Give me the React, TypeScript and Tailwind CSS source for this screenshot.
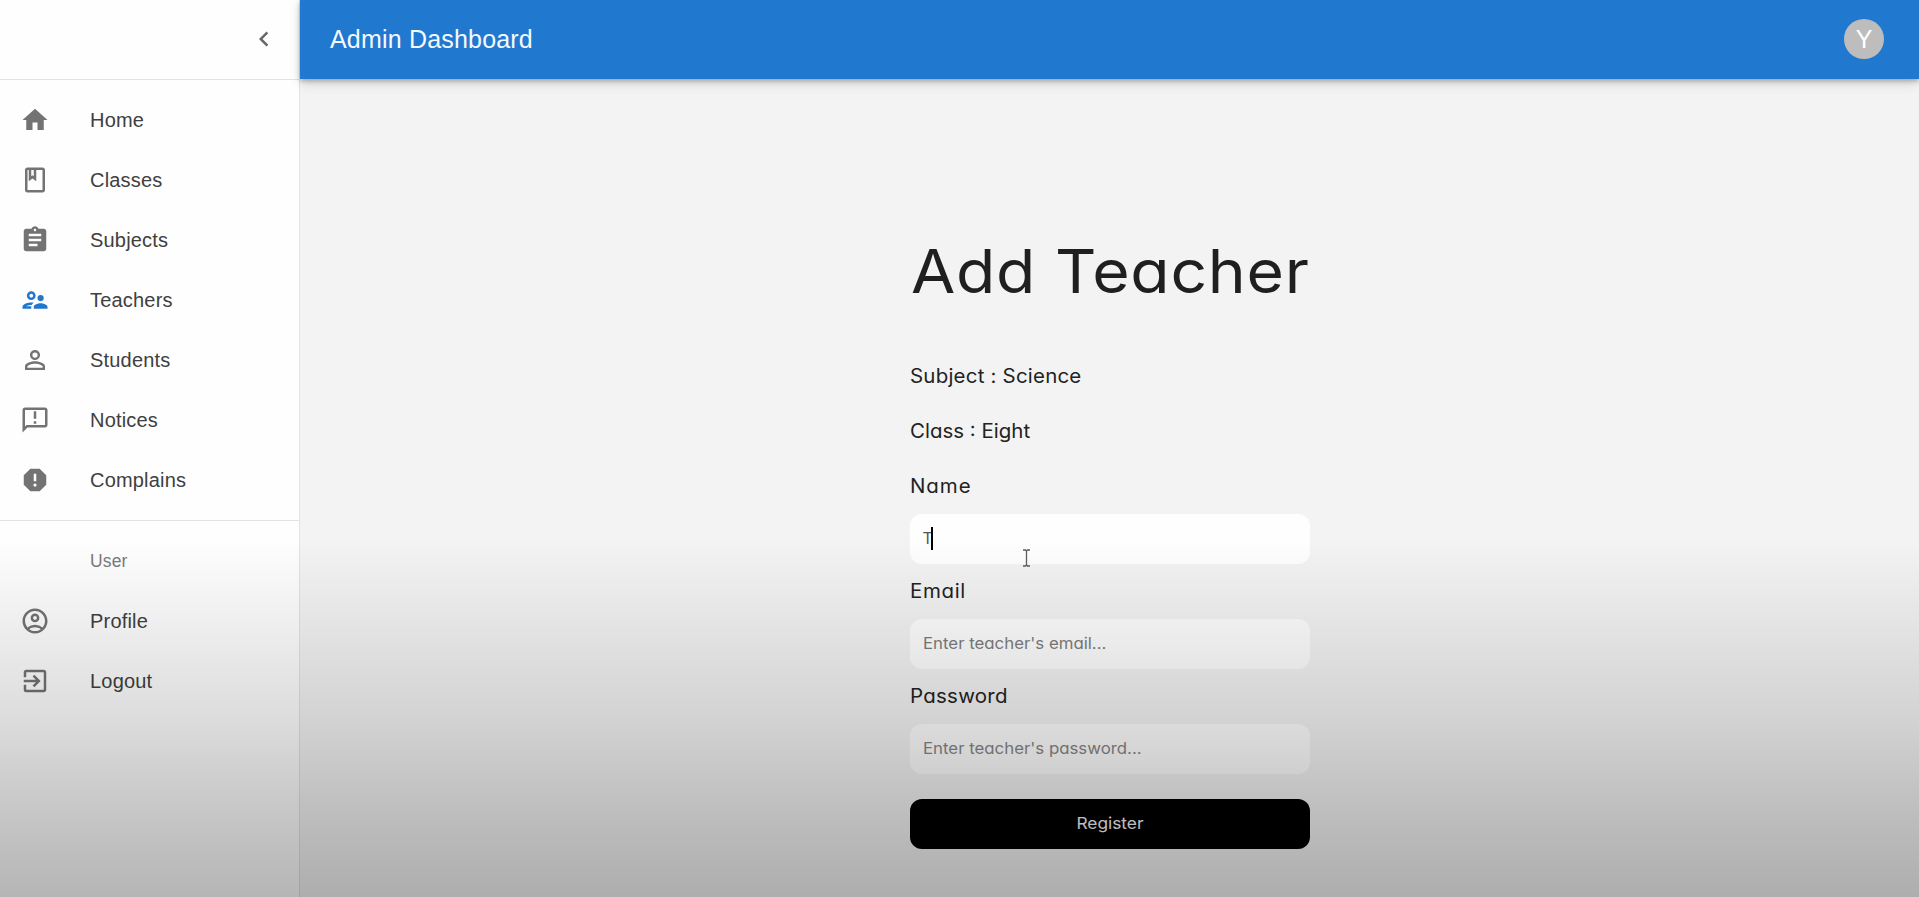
import type { ComponentType } from "react";
import {
  MdAssignment,
  MdChevronLeft,
  MdExitToApp,
  MdHome,
  MdOutlineAccountCircle,
  MdOutlineAnnouncement,
  MdOutlineSupervisorAccount,
  MdPersonOutline,
  MdReport,
} from "react-icons/md";

type NavItem = { label: string; icon: ComponentType<{ size?: number }>; active?: boolean };

function ClassIcon({ size = 24 }: { size?: number }) {
  return (
    <svg width={size} height={size} viewBox="0 0 24 24" fill="currentColor">
      <path d="M18 2H6c-1.1 0-2 .9-2 2v16c0 1.1.9 2 2 2h12c1.1 0 2-.9 2-2V4c0-1.1-.9-2-2-2zM9 4h2v5l-1-.75L9 9V4zm9 16H6V4h1v9l3-2.25L13 13V4h5v16z" />
    </svg>
  );
}

const mainItems: NavItem[] = [
  { label: "Home", icon: MdHome },
  { label: "Classes", icon: ClassIcon },
  { label: "Subjects", icon: MdAssignment },
  { label: "Teachers", icon: MdOutlineSupervisorAccount, active: true },
  { label: "Students", icon: MdPersonOutline },
  { label: "Notices", icon: MdOutlineAnnouncement },
  { label: "Complains", icon: MdReport },
];

const userItems: NavItem[] = [
  { label: "Profile", icon: MdOutlineAccountCircle },
  { label: "Logout", icon: MdExitToApp },
];

function NavLink({ label, icon: Icon, active }: NavItem) {
  return (
    <a className="flex h-[60px] items-center pl-5 text-[20px] tracking-[0.19px] text-[#404040]">
      <span className={active ? "w-[70px] text-[#2176cf]" : "w-[70px] text-[#737373]"}>
        <Icon size={30} />
      </span>
      {label}
    </a>
  );
}

function Sidebar() {
  return (
    <aside className="flex w-[300px] shrink-0 flex-col border-r border-[#e2e2e2] bg-[#fefefe]">
      <div className="flex h-20 items-center justify-end border-b border-[#e2e2e2] pr-5 pb-px">
        <MdChevronLeft size={30} className="text-[#666666]" />
      </div>
      <nav className="flex flex-col pt-[10px]">
        {mainItems.map((item) => (
          <NavLink key={item.label} {...item} />
        ))}
      </nav>
      <nav className="mt-[10px] flex flex-col border-t border-[#e2e2e2] pt-[10px]">
        <h2 className="flex h-[60px] items-center pl-[90px] text-[17.5px] tracking-[0.15px] text-[#7a7a7a]">User</h2>
        {userItems.map((item) => (
          <NavLink key={item.label} {...item} />
        ))}
      </nav>
    </aside>
  );
}

function TopBar() {
  return (
    <header className="z-10 flex h-[79px] shrink-0 items-center justify-between bg-[#2178cf] pr-[35px] pb-px pl-[30px] shadow-[0_2px_5px_rgba(0,0,0,0.28),0_4px_12px_rgba(0,0,0,0.12)]">
      <h1 className="pt-[2px] text-[25px] tracking-[0.19px] text-[#f4f9ff]">Admin Dashboard</h1>
      <div className="flex size-10 items-center justify-center rounded-full bg-[#bdbdbd] pt-px text-[25px] text-white">Y</div>
    </header>
  );
}

const labelClass = "h-[30px] origin-left scale-x-105 leading-[30px]";
const inputClass =
  "mt-[13px] flex h-[50px] items-center rounded-[12px] bg-[#fefefe] pr-[12px] pb-[2px] pl-[13px] text-[16px]";

function TeacherForm() {
  return (
    <form className="mt-[154px] flex w-[400px] flex-col font-['Inter',sans-serif] text-[19.5px] text-[#222222] [font-feature-settings:'cv11']">
      <h2 className="ml-px h-[76px] origin-left scale-x-107 text-[60px] leading-[76px] tracking-[0.7px] whitespace-nowrap text-[#1f1f1f]">
        Add Teacher
      </h2>
      <p className={`${labelClass} mt-[52px] tracking-[0.2px]`}>Subject : Science</p>
      <p className={`${labelClass} mt-[25px]`}>Class : Eight</p>
      <label className={`${labelClass} mt-[25px] tracking-[0.9px]`}>Name</label>
      <div className={`${inputClass} -mb-px`}>
        <span className="text-[#555555]">T</span>
        <span className="-ml-[2px] h-[23px] w-[2px] bg-black" />
      </div>
      <label className={`${labelClass} mt-[13px] tracking-[0.6px]`}>Email</label>
      <div className={`${inputClass} -mb-px`}>
        <span className="origin-left scale-x-105 text-[#7d7d7d]">Enter teacher's email...</span>
      </div>
      <label className={`${labelClass} mt-[13px] tracking-[0.25px]`}>Password</label>
      <div className={inputClass}>
        <span className="origin-left scale-x-105 text-[#868686]">Enter teacher's password...</span>
      </div>
      <button type="button" className="mt-[25px] flex h-[50px] items-center justify-center rounded-[12px] bg-black pb-[2px] text-[16.5px] text-[#f4f4f4]">
        <span className="scale-x-105">Register</span>
      </button>
    </form>
  );
}

function TextCursor() {
  return (
    <svg className="absolute top-[549px] left-[1022px]" width="9" height="18" viewBox="0 0 9 18" fill="none" stroke="#5c5c5c" strokeWidth="1.3">
      <path d="M1 1h2.500l1 1 1-1H8M4.500 2v14M1 17h2.500l1-1 1 1H8" />
    </svg>
  );
}

export default function App() {
  return (
    <div className="relative flex h-[897px] w-full overflow-hidden bg-[#f3f3f3] font-['Liberation_Sans',Arial,sans-serif]">
      <Sidebar />
      <main className="flex flex-1 flex-col">
        <TopBar />
        <div className="flex flex-1 justify-center">
          <TeacherForm />
        </div>
      </main>
      <TextCursor />
      <div className="pointer-events-none absolute inset-x-0 top-[540px] bottom-0 z-20 bg-[linear-gradient(to_bottom,rgba(0,0,0,0)_0%,rgba(0,0,0,0.065)_25%,rgba(0,0,0,0.135)_50%,rgba(0,0,0,0.215)_75%,rgba(0,0,0,0.285)_100%)]" />
    </div>
  );
}
